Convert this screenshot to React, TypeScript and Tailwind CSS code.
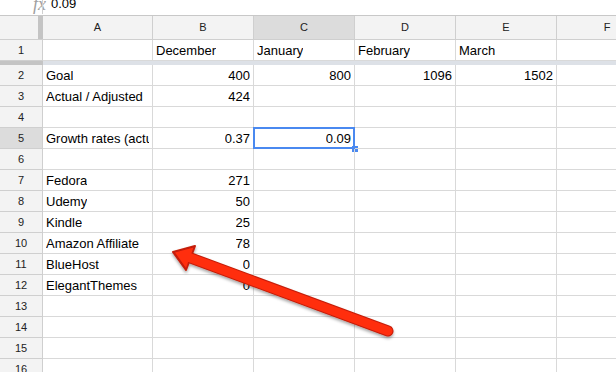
import React from "react";

const font = { fontFamily: '"Liberation Sans", Arial, sans-serif' };

type Row = { n: number; a?: string; b?: string; c?: string; d?: string; e?: string };

const rows: Row[] = [
  { n: 2, a: "Goal", b: "400", c: "800", d: "1096", e: "1502" },
  { n: 3, a: "Actual / Adjusted", b: "424" },
  { n: 4 },
  { n: 5, a: "Growth rates (actual)", b: "0.37", c: "0.09" },
  { n: 6 },
  { n: 7, a: "Fedora", b: "271" },
  { n: 8, a: "Udemy", b: "50" },
  { n: 9, a: "Kindle", b: "25" },
  { n: 10, a: "Amazon Affiliate", b: "78" },
  { n: 11, a: "BlueHost", b: "0" },
  { n: 12, a: "ElegantThemes", b: "0" },
  { n: 13 },
  { n: 14 },
  { n: 15 },
  { n: 16 },
];

function RowHead({ n, sel }: { n: number; sel?: boolean }) {
  return (
    <div
      className={`w-[43px] shrink-0 border-r border-b border-[#cfcfcf] flex items-center justify-center text-[11px] text-[#222] ${
        sel ? "bg-[#dcdcdc]" : "bg-[#f3f3f3]"
      }`}
    >
      {n}
    </div>
  );
}

function Cell({
  w,
  text,
  right,
  selected,
}: {
  w: string;
  text?: string;
  right?: boolean;
  selected?: boolean;
}) {
  return (
    <div
      className={`${w} shrink-0 relative border-r border-b border-[#d9d9d9] flex items-center px-[3px] pt-px text-[13px] text-black whitespace-nowrap ${
        right ? "justify-end" : "justify-start"
      }`}
    >
      <span className="overflow-hidden block">{text}</span>
      {selected && (
        <>
          <div className="absolute left-[-1px] top-[-1px] right-[-1px] bottom-[-1px] border-2 border-[#4a89f0]" />
          <div className="absolute right-[-4px] bottom-[-4px] w-[6px] h-[6px] bg-[#4a89f0]" />
        </>
      )}
    </div>
  );
}

export default function App() {
  return (
    <div className="relative w-[616px] h-[372px] overflow-hidden bg-white" style={font}>
      {/* formula bar */}
      <div className="h-[16px] border-b border-[#c8c8c8] overflow-hidden flex items-start">
        <div className="flex items-center mt-[-7px] h-[22px]">
          <span
            className="ml-[33px] w-[8px] text-[18px] italic text-[#a0a0a0]"
            style={{ fontFamily: '"Liberation Serif", "Times New Roman", serif' }}
          >
            fx
          </span>
          <div className="ml-[1px] w-px h-[18px] mt-[2px] bg-[#d0d0d0]" />
          <span className="ml-[8px] text-[13px] text-black">0.09</span>
        </div>
      </div>

      {/* column header row */}
      <div className="flex h-[24px]">
        <div className="w-[43px] shrink-0 flex bg-[#f3f3f3] border-b border-[#cfcfcf]">
          <div className="w-[38px]" />
          <div className="w-[5px] bg-[#c4c4c4]" />
        </div>
        {[
          ["A", "w-[110px]", false],
          ["B", "w-[101px]", false],
          ["C", "w-[101px]", true],
          ["D", "w-[101px]", false],
          ["E", "w-[101px]", false],
          ["F", "w-[101px]", false],
        ].map(([l, w, s]) => (
          <div
            key={l as string}
            className={`${w} shrink-0 border-r border-b border-[#cfcfcf] flex items-center justify-center text-[11px] text-[#222] ${
              s ? "bg-[#dcdcdc]" : "bg-[#f3f3f3]"
            }`}
          >
            {l}
          </div>
        ))}
      </div>

      {/* row 1 */}
      <div className="flex h-[21px]">
        <RowHead n={1} />
        <Cell w="w-[110px]" />
        <Cell w="w-[101px]" text="December" />
        <Cell w="w-[101px]" text="January" />
        <Cell w="w-[101px]" text="February" />
        <Cell w="w-[101px]" text="March" />
        <Cell w="w-[101px]" />
      </div>

      {/* frozen divider */}
      <div className="flex h-[4px]">
        <div className="w-[43px] shrink-0 bg-[#c4c4c4]" />
        <div className="flex-1 bg-[#dde1e7]" />
      </div>

      {rows.map((r) => (
        <div key={r.n} className="flex h-[21px]">
          <RowHead n={r.n} sel={r.n === 5} />
          <Cell w="w-[110px]" text={r.a} />
          <Cell w="w-[101px]" text={r.b} right />
          <Cell w="w-[101px]" text={r.c} right selected={r.n === 5} />
          <Cell w="w-[101px]" text={r.d} right />
          <Cell w="w-[101px]" text={r.e} right />
          <Cell w="w-[101px]" />
        </div>
      ))}

      {/* red arrow annotation */}
      <svg
        className="absolute left-0 top-0 pointer-events-none"
        width="616"
        height="372"
        viewBox="0 0 616 372"
      >
        <defs>
          <filter id="sh" x="-20%" y="-20%" width="140%" height="140%">
            <feDropShadow dx="0" dy="2" stdDeviation="1.5" floodColor="#000" floodOpacity="0.35" />
          </filter>
        </defs>
        <g filter="url(#sh)">
          <line
            x1="388"
            y1="331"
            x2="188"
            y2="257"
            stroke="#c41d08"
            strokeWidth="11"
            strokeLinecap="round"
          />
          <polygon points="173,252 195,246 186,270" fill="#c41d08" stroke="#c41d08" strokeWidth="2" strokeLinejoin="round" />
          <line
            x1="388"
            y1="331"
            x2="188"
            y2="257"
            stroke="#ff2e0c"
            strokeWidth="9"
            strokeLinecap="round"
          />
          <polygon points="175,252.5 193.5,247.5 186,268" fill="#ff2e0c" />
        </g>
      </svg>
    </div>
  );
}
